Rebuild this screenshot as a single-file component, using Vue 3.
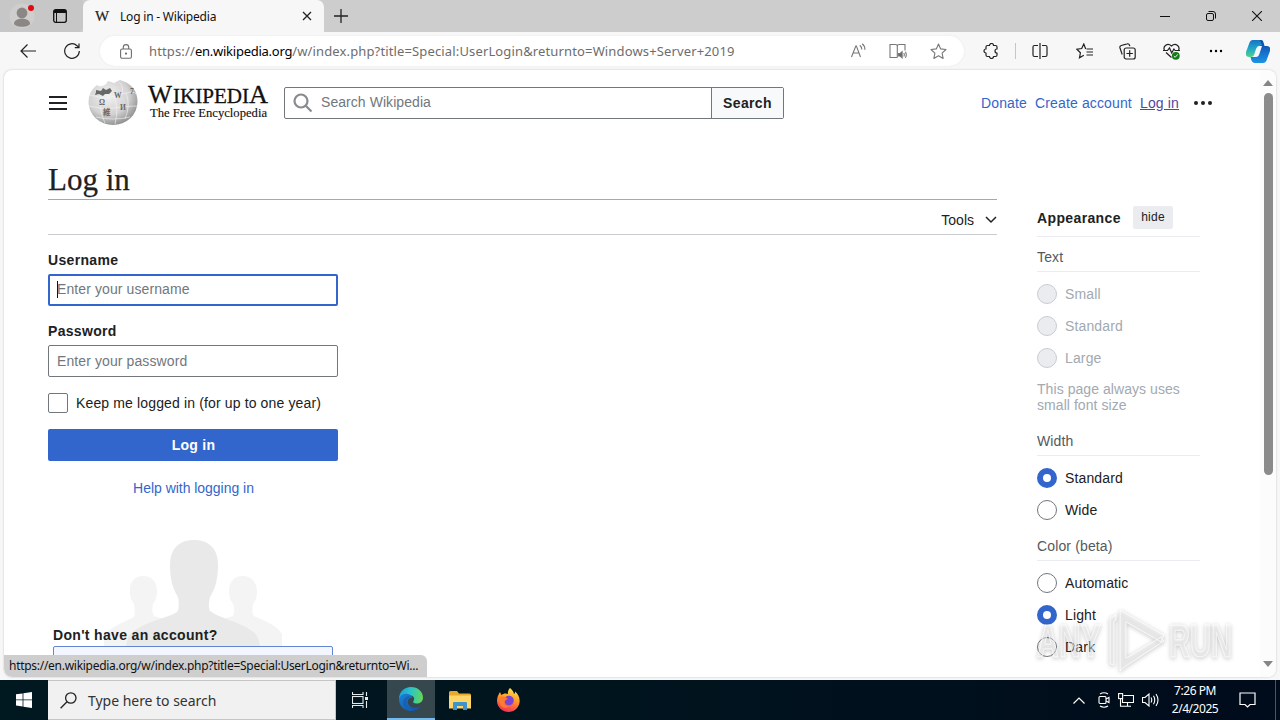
<template>
  <div class="desktop">
    <!-- Tab strip -->
    <div class="tabs">
      <div class="tabs__left">
        <svg class="tabs__avatar" width="32" height="32" viewBox="0 0 32 32">
          <circle cx="16" cy="16" r="12.500" fill="#d0cecc" />
          <circle cx="16" cy="13" r="5.400" fill="#8b8785" />
          <path d="M8 23.500c0-3 3.500-4.800 8-4.800s8 1.800 8 4.800c0 1.800-3.500 3.200-8 3.200s-8-1.400-8-3.200z" fill="#8b8785" />
          <circle cx="25" cy="8" r="3" fill="#e00b12" />
        </svg>
        <svg class="tabs__workspace" width="14" height="14" viewBox="0 0 14 14">
          <rect x=".7" y=".7" width="12.600" height="12.600" rx="2" fill="none" stroke="#111" stroke-width="1.300" />
          <path d="M1 1h12v3H4v9H3V4H1z" fill="#111" />
        </svg>
      </div>
      <div class="tab">
        <span class="tab__favicon">W</span>
        <span class="tab__title">Log in - Wikipedia</span>
        <svg width="10" height="10" viewBox="0 0 10 10"><path d="M1 1l8 8M9 1L1 9" stroke="#222" stroke-width="1.300" /></svg>
      </div>
      <svg class="tabs__new" width="14" height="14" viewBox="0 0 14 14"><path d="M7 0v14M0 7h14" stroke="#222" stroke-width="1.300" /></svg>
      <div class="tabs__window">
        <svg width="10" height="10" viewBox="0 0 10 10"><path d="M0 5.500h10" stroke="#111" /></svg>
        <svg width="10" height="10" viewBox="0 0 10 10" fill="none" stroke="#111">
          <rect x=".5" y="2.500" width="7" height="7" rx="1.500" />
          <path d="M2.500 .5H7A2.500 2.500 0 0 1 9.500 3v4.500" />
        </svg>
        <svg width="10" height="10" viewBox="0 0 10 10"><path d="M0 0l10 10M10 0L0 10" stroke="#111" stroke-width="1.100" /></svg>
      </div>
    </div>

    <!-- Toolbar -->
    <div class="toolbar">
      <svg class="toolbar__back" width="16" height="14" viewBox="0 0 16 14" fill="none" stroke="#222" stroke-width="1.200"><path d="M16 7H1M7.500 .5L1 7l6.500 6.500" /></svg>
      <svg class="toolbar__reload" width="16" height="16" viewBox="0 0 16 16" fill="none" stroke="#222" stroke-width="1.200"><path d="M15.300 8A7.300 7.300 0 1 1 13 2.700L14.800 4.500M15 .5v4.200h-4.200" /></svg>
      <div class="address">
        <svg width="12" height="15" viewBox="0 0 12 15" fill="none" stroke="#6d6d6d" stroke-width="1.100">
          <rect x=".6" y="5" width="10.800" height="9.300" rx="1.500" />
          <path d="M3.300 5V3.300a2.700 2.700 0 0 1 5.400 0V5" />
          <circle cx="6" cy="9.600" r=".6" fill="#6d6d6d" />
        </svg>
        <span class="address__url">https://<b>en.wikipedia.org</b>/w/index.php?title=Special:UserLogin&amp;returnto=Windows+Server+2019</span>
        <div class="address__actions">
          <svg width="16" height="16" viewBox="0 0 16 16" fill="none" stroke="#777" stroke-width="1.100">
            <path d="M1.500 14L5.800 3h.6L10.500 14M3 10h6M9.800 2.200q2 1.500 2 4.300M12.200 .7q2.800 2.200 2.700 6" />
          </svg>
          <svg width="18" height="16" viewBox="0 0 18 16" fill="none" stroke="#777" stroke-width="1.100">
            <path d="M8.300 14.500H1V1.500h5.300q2 0 2 1.500v11.500M8.300 3q0-1.500 2-1.500H16v6" />
            <path d="M9.500 10.500h1.600l2-1.800v6.100l-2-1.800H9.500z" fill="#666" />
            <path d="M14.800 10q1 1.500 0 3.500M16.400 8.800q1.700 2.800 0 6" />
          </svg>
          <svg width="17" height="17" viewBox="0 0 17 17" fill="none" stroke="#777" stroke-width="1.100" stroke-linejoin="round">
            <path d="M8.500 1l2.200 4.900 5.300.6-3.900 3.600 1 5.300-4.600-2.600-4.600 2.600 1-5.300L1 6.500l5.300-.6z" />
          </svg>
        </div>
      </div>
      <div class="toolbar__icons">
        <svg class="puzzle" width="16" height="16" viewBox="0 0 16 16" fill="none" stroke="#222" stroke-width="1.200" stroke-linejoin="round">
          <path d="M4.500 2.500H6.500a2 2 0 0 1 4 0h2q1.500 0 1.500 1.500v2a2 2 0 0 0 0 4v2q0 1.500-1.500 1.500h-2a2 2 0 0 1-4 0H4.500Q3 13.500 3 12v-2a2 2 0 0 1 0-4V4q0-1.500 1.500-1.500z" />
        </svg>
        <i class="toolbar__divider"></i>
        <svg class="split" width="16" height="16" viewBox="0 0 16 16" fill="none" stroke="#222" stroke-width="1.200"><path d="M6 2.500H2.500a1.500 1.500 0 0 0-1.500 1.500v8a1.500 1.500 0 0 0 1.500 1.500H6M10 2.500h3.500A1.500 1.500 0 0 1 15 4v8a1.500 1.500 0 0 1-1.500 1.500H10M8 0v16" /></svg>
        <svg class="favs" width="17" height="16" viewBox="0 0 17 16" fill="none" stroke="#222" stroke-width="1.200"><path d="M9.700 6L7.800 1 5.700 5.500.9 6.200l3.500 3.600-.9 5 4.300-2.600M10.500 6H17M10.500 9H17M10.500 12H17" /></svg>
        <svg class="collections" width="17" height="17" viewBox="0 0 17 17" fill="none" stroke="#222" stroke-width="1.200"><path d="M3.200 11.500L1 5a2 2 0 0 1 1.300-2.500L8 .9a2 2 0 0 1 2.500 1.300l.3 1" /><rect x="5.200" y="5" width="11" height="11" rx="2" /><path d="M10.700 7.300v6.400M7.500 10.500h6.400" /></svg>
        <svg class="health" width="17" height="17" viewBox="0 0 17 17" fill="none" stroke="#222" stroke-width="1.200"><path d="M1.500 7.500C-.5 3 4.500-.8 8.500 3 12.500-.8 17.500 3 15.500 7.500M3 9.500l5.500 5M0 7.500h4.500L6.500 5l2.200 5 2.200-4 1.200 1.500H17" /><circle cx="12.800" cy="12.800" r="3.900" fill="#117b18" stroke="none" /><path d="M10.800 13l1.400 1.300 2.600-3" stroke="#fff" stroke-width=".9" /></svg>
        <svg class="more" width="14" height="4" viewBox="0 0 14 4"><circle cx="2" cy="2" r="1.200" /><circle cx="7" cy="2" r="1.200" /><circle cx="12" cy="2" r="1.200" /></svg>
        <svg class="copilot" width="24" height="23" viewBox="0 0 24 23">
          <defs>
            <linearGradient id="cpA" x1="0" y1="0" x2="0" y2="1"><stop offset="0" stop-color="#1672c5" /><stop offset=".5" stop-color="#20a7c8" /><stop offset="1" stop-color="#4cd48c" /></linearGradient>
            <linearGradient id="cpB" x1="0" y1="0" x2="0" y2="1"><stop offset="0" stop-color="#123e9b" /><stop offset=".5" stop-color="#176cca" /><stop offset="1" stop-color="#1b93e4" /></linearGradient>
          </defs>
          <path d="M7 0h8q3 0 2 3l-1 3h-3q-2 0-3 3l-2 6q-.8 2-3 2H3q-4 0-3-5L3 4q1-4 4-4z" fill="url(#cpA)" />
          <path d="M14 0q3 0 4 4l.5 2H21q4 0 3 5l-3 8q-1 4-4 4H9q-3 0-4-4l-.5-2H8q2 0 3-3l2-7q.8-2 3-2z" fill="url(#cpB)" />
          <path d="M13 6h3l-3 9q-.8 2-3 2H7q2-.5 3-3z" fill="#f3f8fb" />
        </svg>
      </div>
    </div>

    <!-- Viewport -->
    <div class="page">
      <div class="page__body">
        <header class="header">
          <svg class="header__menu" width="18" height="14" viewBox="0 0 18 14"><path d="M0 1h18M0 7h18M0 13h18" stroke="#202122" stroke-width="2" /></svg>
          <svg class="header__logo" width="184" height="50" viewBox="0 0 184 50">
            <defs>
              <radialGradient id="globe" cx=".4" cy=".35" r=".7"><stop offset="0" stop-color="#f2f2f2" /><stop offset=".6" stop-color="#d2d2d2" /><stop offset="1" stop-color="#8a8a8a" /></radialGradient>
            </defs>
            <path d="M9 7Q13 10 18 6l2-3 6 2 6-3Q49.500 7 49.500 24A24.500 23 0 0 1 25 47 24.500 23 0 0 1 .5 24Q.5 13 9 7z" fill="url(#globe)" />
            <path d="M8 12l5 1 2-3 3 2 4-2 2 3-3 3-4 0-2 2-4-2-4 1 1-3z" fill="#686868" />
            <path d="M2 17q12 3 16 3t16-4 14 0M1 28q13 4 25 2t23-2M8 39q17 4 34 0M14 19q-4 12 3 26M26 18q5 12 1 28M38 15q5 12-1 26M31 4q5 4 3 12" fill="none" stroke="#f5f5f5" stroke-width=".6" />
            <g class="globe-text"><text x="11" y="27">Ω</text><text x="26" y="20">W</text><text x="32" y="32">И</text><text x="15" y="37">維</text><text x="42" y="16">7</text></g>
            <g class="wordmark">
              <text x="60" y="24.500" font-size="26" textLength="24" lengthAdjust="spacingAndGlyphs">W</text>
              <text x="85" y="24.500" font-size="20" textLength="76" lengthAdjust="spacingAndGlyphs">IKIPEDI</text>
              <text x="161" y="24.500" font-size="26" textLength="19" lengthAdjust="spacingAndGlyphs">A</text>
              <text class="wordmark__tag" x="62" y="39" font-size="13.500" textLength="117" lengthAdjust="spacingAndGlyphs">The Free Encyclopedia</text>
            </g>
          </svg>
          <div class="search">
            <div class="search__field">
              <svg width="20" height="20" viewBox="0 0 20 20" fill="none" stroke="#888b90" stroke-width="2.200"><circle cx="8" cy="8" r="6.500" /><path d="M12.500 12.500L18.500 18.500" /></svg>
              <span>Search Wikipedia</span>
            </div>
            <div class="search__button">Search</div>
          </div>
          <nav class="links">
            <a class="links__donate">Donate</a>
            <a class="links__create">Create account</a>
            <a class="links__login">Log in</a>
            <svg width="18" height="4" viewBox="0 0 18 4"><circle cx="2" cy="2" r="2" /><circle cx="9" cy="2" r="2" /><circle cx="16" cy="2" r="2" /></svg>
          </nav>
        </header>

        <div class="columns">
          <main class="content">
            <h1>Log in</h1>
            <div class="tools">
              <span>Tools</span>
              <svg width="12" height="8" viewBox="0 0 12 8"><path d="M1 1l5 5 5-5" fill="none" stroke="#202122" stroke-width="1.500" /></svg>
            </div>
            <form class="form">
              <label class="form__label">Username</label>
              <div class="input input--focus"><i class="caret"></i><span>Enter your username</span></div>
              <label class="form__label">Password</label>
              <div class="input"><span>Enter your password</span></div>
              <div class="keep"><i></i><span>Keep me logged in (for up to one year)</span></div>
              <div class="submit">Log in</div>
              <a class="help">Help with logging in</a>
              <div class="signup">
                <svg class="signup__people" width="178" height="106" viewBox="0 0 178 106">
                  <g fill="#f4f4f4">
                    <path d="M39 36c-9 0-14 7-13 16 0 6 2 9 4 12 1 5 1 10 0 13C18 83 6 87 0 96v10h80V85L50 76c-2-3-2-8-1-12 3-4 4-8 4-13 0-9-5-15-14-15z" />
                    <path d="M139 36c9 0 14 7 14 16 0 6-2 9-4 12-1 5-1 10 1 12 10 5 22 8 28 18v12H98V85l31-9c1-3 2-8 0-12-3-4-4-8-4-13 0-9 5-15 14-15z" />
                  </g>
                  <path d="M90 0C74 0 66 10 66 25c0 15 3 24 8 32 1 5 1 9 0 14-9 8-36 9-50 26l-2 9h134c-1-7-3-12-8-15-14-10-33-13-42-20-2-4-1-9 0-14 5-8 8-17 8-32C114 10 106 0 90 0z" fill="#e9e9e9" />
                </svg>
                <b>Don't have an account?</b>
                <div class="signup__button"></div>
              </div>
            </form>
          </main>

          <aside class="appearance">
            <div class="appearance__head"><b>Appearance</b><span>hide</span></div>
            <section v-for="group in groups" :key="group.title" class="group">
              <div class="group__title">{{ group.title }}</div>
              <div v-for="option in group.options" :key="option" class="radio" :class="{ 'radio--on': option === group.value, 'radio--off': group.disabled }">
                <i></i><span>{{ option }}</span>
              </div>
              <p v-if="group.note" class="group__note">{{ group.note }}</p>
            </section>
          </aside>
        </div>
      </div>
      <div class="scrollbar">
        <svg width="10" height="6" viewBox="0 0 10 6"><path d="M0 6l5-6 5 6z" fill="#858585" /></svg>
        <i></i>
        <svg width="10" height="6" viewBox="0 0 10 6"><path d="M0 0l5 6 5-6z" fill="#858585" /></svg>
      </div>
      <div class="status">https://en.wikipedia.org/w/index.php?title=Special:UserLogin&amp;returnto=Wi...</div>
      <svg class="watermark" width="206" height="68" viewBox="0 0 206 68">
        <text x="4" y="50" textLength="64" lengthAdjust="spacingAndGlyphs">ANY</text>
        <text x="136" y="50" textLength="63" lengthAdjust="spacingAndGlyphs">RUN</text>
        <path d="M77 57V11l6-3v5l-2 1v44zM87 3l44 25-3 7L93 15v36l35-21 3 4-38 25-6 5z" />
      </svg>
    </div>

    <!-- Taskbar -->
    <div class="taskbar">
      <div class="taskbar__start">
        <svg width="16" height="16" viewBox="0 0 16 16" fill="#fff"><path d="M0 2.300l6.600-.9v6.100H0zM7.400 1.300L16 0v7.500H7.400zM0 8.300h6.600v6.200L0 13.600zM7.400 8.300H16V16l-8.600-1.300z" /></svg>
      </div>
      <div class="taskbar__search">
        <svg width="17" height="17" viewBox="0 0 17 17" fill="none" stroke="#222" stroke-width="1.300"><circle cx="10.800" cy="6" r="5.200" /><path d="M7 9.800L.6 16.300" /></svg>
        <span>Type here to search</span>
      </div>
      <div class="taskbar__item taskbar__item--view">
        <svg width="17" height="16" viewBox="0 0 17 16" fill="none" stroke="#e4ebed" stroke-width="1.100"><path d="M.5 0v2.500h10.500V0M.5 16v-2.500h10.500V16M14.500 0v4M14.500 9v7" /><rect x=".5" y="4.500" width="10.500" height="7" /><path d="M13 5h3v3h-3z" fill="#e4ebed" stroke="none" /></svg>
      </div>
      <div class="taskbar__item taskbar__item--active">
        <svg width="24" height="24" viewBox="0 0 24 24">
          <defs>
            <linearGradient id="edgeTop" x1="0" y1=".4" x2="1" y2=".5"><stop offset="0" stop-color="#209edb" /><stop offset=".5" stop-color="#2cc5c6" /><stop offset="1" stop-color="#65d852" /></linearGradient>
            <linearGradient id="edgeLow" x1="0" y1="0" x2="1" y2="1"><stop offset="0" stop-color="#1c83d8" /><stop offset="1" stop-color="#124e9b" /></linearGradient>
          </defs>
          <path d="M0 12C0 5 5 0 12 0s12 5 12 10.500c0 4-3 6-6.500 6-3 0-4-1.400-3-2.500 1.500-2 .5-5-2.500-5.500C7 7.500 2 9 0 12z" fill="url(#edgeTop)" />
          <path d="M0 12c1-4 5-6 9-5 2 .5 4 2 4.500 3.500C9 10 7.500 15 10 18c2 3 7 4 12 1-2 3-5.500 5-10 5C5 24 0 19 0 12z" fill="url(#edgeLow)" />
          <path d="M9.500 11C6 14 8 21 14 23.800 8 24 4 20 4.200 15.500 4.300 12 7 9.500 11 9z" fill="#1762b5" />
        </svg>
      </div>
      <div class="taskbar__item">
        <svg width="22" height="19" viewBox="0 0 22 19"><path d="M0 1.500Q0 0 1.500 0H8l2 2.500h10.500Q22 2.500 22 4v13H0z" fill="#e9a92b" /><path d="M0 4.500h22v13H0z" fill="#ffd567" /><path d="M4 19v-7q0-1 1-1h12q1 0 1 1v7h-4v-4H8v4z" fill="#3f93cc" /></svg>
      </div>
      <div class="taskbar__item">
        <svg width="23" height="24" viewBox="0 0 23 24">
          <defs><linearGradient id="fox" x1=".7" y1="0" x2=".4" y2="1"><stop offset="0" stop-color="#ffe94b" /><stop offset=".45" stop-color="#ff9a29" /><stop offset="1" stop-color="#f52e59" /></linearGradient></defs>
          <path d="M13 0c2 2 3.500 3 4 6 1-.5 1-1.500 1-2.500 3 2.500 5 6 4.600 10.500C22 20 17 24 11.500 24S0 19.500 0 13C0 9 1.500 6.500 3 4l1.300 3C6 5.500 9 5 11 6c-.5-2 .5-4.500 2-6z" fill="url(#fox)" />
          <circle cx="12" cy="12.500" r="4.800" fill="#7a45d4" />
          <path d="M3 9c4-1 5.500 0 8 2-1 .2-3 1-3.500 3-1 3 2.500 5 5 4-3 3-8 2-9.500-2z" fill="#ff7b2f" />
        </svg>
      </div>
      <div class="tray">
        <svg class="tray__up" width="12" height="7" viewBox="0 0 12 7" fill="none" stroke="#fff" stroke-width="1.200"><path d="M.5 6.500L6 1l5.500 5.500" /></svg>
        <svg width="12" height="16" viewBox="0 0 12 16" fill="none" stroke="#fff" stroke-width="1.100"><rect x="1" y="4.500" width="7" height="7" rx="1" /><path d="M8 7l3-1.500v5L8 9M2 2q4-2.500 8 0M2 14q4 2.500 8 0" /></svg>
        <svg width="16" height="14" viewBox="0 0 16 14" fill="none" stroke="#fff" stroke-width="1.100"><path d="M5.500 2.500h10v7h-11V6M9.500 9.500v3.500M5 13.300h8M2.500 6v7.300H6" /><rect x=".6" y=".6" width="4" height="5" /></svg>
        <svg width="17" height="14" viewBox="0 0 17 14" fill="none" stroke="#fff" stroke-width="1.100"><path d="M.5 4.500H3l4-3.500v12L3 9.500H.5zM9 4.500q1.500 2.500 0 5M11.500 2.800q2.500 4.200 0 8.400M14 1q4 6 0 12" /></svg>
        <div class="tray__clock"><span>7:26 PM</span><span>2/4/2025</span></div>
        <svg class="tray__note" width="17" height="16" viewBox="0 0 17 16" fill="none" stroke="#fff" stroke-width="1.200"><path d="M1 1h15v11.500h-5L8.500 15 6 12.500H1z" /></svg>
        <i class="tray__peek"></i>
      </div>
    </div>
  </div>
</template>

<script setup>
const groups = [
  {
    title: 'Text',
    options: ['Small', 'Standard', 'Large'],
    disabled: true,
    note: 'This page always uses small font size',
  },
  { title: 'Width', options: ['Standard', 'Wide'], value: 'Standard' },
  { title: 'Color (beta)', options: ['Automatic', 'Light', 'Dark'], value: 'Light' },
]
</script>

<style>
body {
  margin: 0;
  overflow: hidden;
}
</style>

<style scoped>
.desktop {
  width: 1280px;
  height: 720px;
  display: flex;
  flex-direction: column;
  background: #f7f7f7;
  overflow: hidden;
  font-family: 'Noto Sans', sans-serif;
  color: #202122;
}

.desktop * {
  box-sizing: border-box;
}

svg {
  flex: none;
  display: block;
}

span,
a,
b {
  white-space: nowrap;
}

/* ─── Tabs ─────────────────────────────────────────── */
.tabs {
  height: 32px;
  flex: none;
  display: flex;
  align-items: center;
  background: #cdcdcd;
}

.tabs__left {
  width: 83px;
  height: 32px;
  display: flex;
  align-items: center;
  padding-left: 6px;
  background: #c7c7c7;
  border-radius: 0 0 6px 0;
}

.tabs__workspace {
  margin-left: 15px;
}

.tab {
  width: 241px;
  height: 32px;
  display: flex;
  align-items: center;
  padding: 0 12px;
  background: #f7f7f7;
  border-radius: 7px 7px 0 0;
}

.tab__favicon {
  width: 14px;
  padding-top: 1px;
  font: 15px 'Liberation Serif', serif;
  -webkit-text-stroke: 0.2px #202122;
}

.tab__title {
  flex: 1;
  margin-left: 11px;
  font-size: 12px;
  letter-spacing: -0.2px;
  color: #111;
}

.tabs__new {
  margin-left: 10px;
}

.tabs__window {
  margin-left: auto;
  margin-right: 18px;
  display: flex;
  gap: 36px;
}

/* ─── Toolbar ──────────────────────────────────────── */
.toolbar {
  height: 38px;
  flex: none;
  display: flex;
  align-items: center;
}

.toolbar__back {
  margin-left: 20px;
}

.toolbar__reload {
  margin-left: 28px;
}

.address {
  width: 864px;
  height: 30px;
  margin-left: 20px;
  padding: 0 17px 0 20px;
  display: flex;
  align-items: center;
  background: #fff;
  border-radius: 15px;
  box-shadow: 0 0 2px #e4e4e4;
}

.address__url {
  margin-left: 17px;
  font-size: 13px;
  letter-spacing: 0.14px;
  color: #6d6d6d;
}

.address__url b {
  font-weight: 400;
  letter-spacing: -0.25px;
  color: #000;
}

.address__actions {
  margin-left: auto;
  display: flex;
  align-items: center;
  gap: 23px;
}

.toolbar__icons {
  flex: 1;
  display: flex;
  align-items: center;
  padding-left: 19px;
}

.toolbar__divider {
  width: 1px;
  height: 16px;
  margin: 0 16px;
  background: #c6c6c6;
}

.favs {
  margin-left: 28px;
}

.collections {
  margin-left: 26px;
}

.health {
  margin-left: 27px;
}

.more {
  margin-left: 29px;
}

.copilot {
  margin-left: 23px;
}

/* ─── Page ─────────────────────────────────────────── */
.page {
  position: relative;
  width: 1272px;
  height: 607px;
  flex: none;
  margin: 0 4px 3px;
  display: flex;
  background: #fff;
  border-radius: 8px;
  box-shadow: 0 0 2px #bbb;
  overflow: hidden;
  font-family: 'Liberation Sans', Arial, sans-serif;
  font-size: 14px;
  letter-spacing: 0.14px;
}

.page__body {
  width: 1256px;
  height: 607px;
  padding-left: 44px;
  overflow: hidden;
}

.header {
  height: 66px;
  display: flex;
  align-items: center;
}

.header__menu {
  margin-left: 1px;
}

.header__logo {
  margin: 0 0 0 21px;
}

.globe-text {
  font: bold 7.5px 'Liberation Serif', 'Noto Sans CJK JP', serif;
  fill: #666;
}

.wordmark {
  font-family: 'Liberation Serif', serif;
  fill: #111;
  stroke: #111;
  stroke-width: 0.3px;
  letter-spacing: 0;
}

.wordmark__tag {
  stroke-width: 0.15px;
}

.search {
  width: 500px;
  height: 32px;
  margin-left: 12px;
  display: flex;
  border: 1px solid #72777d;
  border-radius: 2px;
}

.search__field {
  flex: 1;
  display: flex;
  align-items: center;
  gap: 8px;
  padding-left: 8px;
  color: #72777d;
  letter-spacing: 0.06px;
}

.search__field span {
  padding-bottom: 2px;
}

.search__button {
  width: 72px;
  border-left: 1px solid #72777d;
  background: #f8f9fa;
  font-weight: 700;
  letter-spacing: 0.35px;
  line-height: 31px;
  text-align: center;
}

.links {
  margin-left: 197px;
  display: flex;
  align-items: center;
  color: #36c;
}

.links__donate {
  width: 54px;
}

.links__create {
  width: 105px;
}

.links__login {
  width: 54px;
  color: #51489c;
  text-decoration: underline;
}

.links svg {
  fill: #202122;
}

.columns {
  display: flex;
  gap: 40px;
}

.content {
  width: 949px;
}

h1 {
  height: 64px;
  margin: 0;
  padding-top: 26px;
  border-bottom: 1px solid #a2a9b1;
  font: 400 31px/36px 'Liberation Serif', serif;
  letter-spacing: 0;
  -webkit-text-stroke: 0.25px #202122;
}

.tools {
  height: 35px;
  display: flex;
  align-items: center;
  justify-content: flex-end;
  gap: 11px;
  padding-top: 5px;
  border-bottom: 1px solid #c8ccd1;
  letter-spacing: 0;
}

.form {
  width: 290px;
  display: flex;
  flex-direction: column;
}

.form__label {
  margin-top: 17px;
  font-weight: 700;
  letter-spacing: 0.32px;
  line-height: 16px;
}

.input {
  height: 32px;
  margin-top: 6px;
  display: flex;
  align-items: center;
  padding: 0 8px;
  border: 1px solid #72777d;
  border-radius: 2px;
  letter-spacing: 0.1px;
  color: #72777d;
}

.input--focus {
  padding: 0 7px 2px;
  border: 2px solid #36c;
}

.caret {
  width: 1px;
  height: 17px;
  margin-right: -1px;
  background: #111;
}

.keep {
  height: 20px;
  margin-top: 16px;
  display: flex;
  align-items: center;
  gap: 8px;
}

.keep i {
  width: 20px;
  height: 20px;
  border: 1px solid #72777d;
  border-radius: 2px;
}

.submit {
  height: 32px;
  margin-top: 16px;
  padding-left: 1px;
  background: #36c;
  border-radius: 2px;
  color: #fff;
  font-weight: 700;
  letter-spacing: 0.25px;
  line-height: 32px;
  text-align: center;
}

.help {
  margin-top: 19px;
  padding-left: 1px;
  line-height: 16px;
  text-align: center;
  letter-spacing: -0.03px;
  color: #36c;
}

.signup {
  position: relative;
  margin-top: 44px;
  padding: 87px 5px 0;
  display: flex;
  flex-direction: column;
}

.signup__people {
  position: absolute;
  left: 56px;
  top: 0;
}

.signup b {
  position: relative;
  line-height: 16px;
  letter-spacing: 0.33px;
}

.signup__button {
  position: relative;
  height: 32px;
  margin-top: 3px;
  border: 1px solid #6485d1;
  border-radius: 2px;
  background: #f3f6ff;
}

/* ─── Appearance ───────────────────────────────────── */
.appearance {
  width: 163px;
  padding-top: 70px;
}

.appearance__head {
  height: 31px;
  display: flex;
  gap: 12px;
  border-bottom: 1px solid #eaecf0;
}

.appearance__head b {
  width: 84px;
  line-height: 24px;
  letter-spacing: 0.37px;
}

.appearance__head span {
  width: 40px;
  height: 23px;
  background: #eaecf0;
  border-radius: 2px;
  font-size: 12px;
  letter-spacing: 0.24px;
  line-height: 23px;
  text-align: center;
}

.group__title {
  height: 35px;
  margin-bottom: 12px;
  padding-top: 12px;
  border-bottom: 1px solid #eaecf0;
  line-height: 16px;
  color: #54595d;
}

.radio {
  height: 20px;
  margin-bottom: 12px;
  display: flex;
  align-items: center;
  gap: 8px;
}

.radio i {
  width: 20px;
  height: 20px;
  border: 1px solid #72777d;
  border-radius: 50%;
}

.radio--on i {
  border: 6px solid #36c;
}

.radio--off {
  color: #a2a9b1;
}

.radio--off i {
  border-color: #c8ccd1;
  background: #eaecf0;
}

.group__note {
  width: 160px;
  margin: 13px 0 14px;
  line-height: 16px;
  letter-spacing: 0.06px;
  color: #a2a9b1;
}

.group + .group .group__title {
  margin-top: -6px;
}

/* ─── Overlays ─────────────────────────────────────── */
.scrollbar {
  width: 16px;
  display: flex;
  flex-direction: column;
  align-items: center;
  padding: 10px 0 10px;
  background: #fcfcfc;
}

.scrollbar i {
  width: 9px;
  height: 382px;
  margin: 7px 0 auto;
  background: #8b8b8b;
  border-radius: 5px;
}

.status {
  position: absolute;
  left: 0;
  bottom: 0;
  width: 423px;
  height: 22px;
  padding-left: 5px;
  background: #cecece;
  border-radius: 0 6px 0 8px;
  font: 12px/21px 'Noto Sans', sans-serif;
  letter-spacing: -0.28px;
  color: #111;
  white-space: nowrap;
}

.watermark {
  position: absolute;
  left: 1029px;
  top: 537px;
  fill: rgba(255, 255, 255, 0.4);
  stroke: rgba(255, 255, 255, 0.75);
  filter: drop-shadow(0 1px 2px rgba(0, 0, 0, 0.4));
  font: 700 47px 'Liberation Sans', sans-serif;
  letter-spacing: 0;
}

/* ─── Taskbar ──────────────────────────────────────── */
.taskbar {
  height: 40px;
  flex: none;
  display: flex;
  background: linear-gradient(90deg, #001820, #00141e 50%, #000b1b);
}

.taskbar__start,
.taskbar__item {
  width: 48px;
  display: flex;
  align-items: center;
  justify-content: center;
}

.taskbar__item {
  width: 49px;
}

.taskbar__item--view {
  padding-right: 4px;
}

.taskbar__item--active {
  width: 48px;
  background: #36474e;
  border-bottom: 2px solid #76b9ed;
}

.taskbar__search {
  width: 288px;
  margin-right: 2px;
  display: flex;
  align-items: center;
  gap: 11px;
  padding-left: 12px;
  background: #f1f1f1;
  border: 1px solid #c6c6c6;
  border-left: 0;
  font-size: 14px;
  letter-spacing: -0.03px;
  color: #333;
}

.tray {
  margin-left: auto;
  width: 207px;
  display: flex;
  align-items: center;
  gap: 8px;
}

.tray__up {
  margin-right: 5px;
}

.tray__clock {
  width: 50px;
  margin-left: 3px;
  display: flex;
  flex-direction: column;
  align-items: center;
  font-size: 12px;
  line-height: 18px;
  letter-spacing: -0.45px;
  color: #fff;
}

.tray__note {
  margin-left: 11px;
}

.tray__peek {
  width: 1px;
  height: 40px;
  margin-left: 11px;
  background: #4a5560;
}
</style>
